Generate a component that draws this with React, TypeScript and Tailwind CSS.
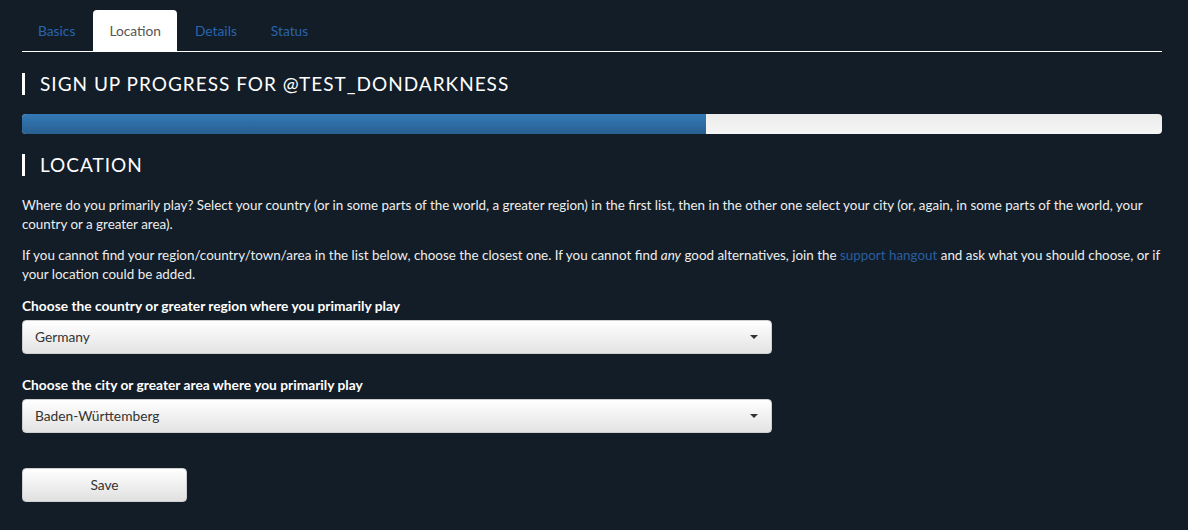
import { useState } from "react";

const tabs = ["Basics", "Location", "Details", "Status"];

const SectionHeading = ({ children }: { children: string }) => (
  <h2 className="border-l-[3px] border-white pl-[15px] text-[19px] leading-[22px] tracking-[1px] uppercase text-white">
    {children}
  </h2>
);

const SelectBox = ({ value }: { value: string }) => (
  <div className="w-[750px] h-[34px] rounded-[4px] bg-gradient-to-b from-white to-[#e3e3e3] border border-[#cfcfcf] flex items-center justify-between pl-[12px] pr-[13px] text-[13.75px] text-[#333]">
    <span>{value}</span>
    <span className="w-0 h-0 border-l-[4px] border-r-[4px] border-t-[4px] border-l-transparent border-r-transparent border-t-[#333]" />
  </div>
);

const App = () => {
  const [active, setActive] = useState("Location");

  return (
    <div
      className="min-h-screen w-full bg-[#121d28] text-[#eeeeee]"
      style={{ fontFamily: "Lato, 'Open Sans', sans-serif" }}
    >
      <div className="ml-[22px] w-[1140px] pt-[10px]">
        {/* Tabs */}
        <div className="flex border-b border-white h-[42px]">
          {tabs.map((tab) => (
            <button
              key={tab}
              onClick={() => setActive(tab)}
              className={
                tab === active
                  ? "h-[42px] -mb-px px-[16px] pt-px mr-[2px] rounded-t-[4px] bg-white text-[13.75px] text-[#555]"
                  : "h-[41px] px-[16px] pt-px mr-[2px] text-[13.75px] text-[#2a64ad]"
              }
            >
              {tab}
            </button>
          ))}
        </div>

        {/* Progress */}
        <div className="mt-[21px]">
          <SectionHeading>Sign up progress for @test_dondarkness</SectionHeading>
        </div>
        <div className="mt-[19px] h-[20px] w-full rounded-[4px] bg-gradient-to-b from-[#ebebeb] to-[#f5f5f5] overflow-hidden">
          <div className="h-full w-[60%] bg-gradient-to-b from-[#337ab7] to-[#286090]" />
        </div>

        {/* Location */}
        <div className="mt-[20px]">
          <SectionHeading>Location</SectionHeading>
        </div>

        <p className="mt-[20px] text-[13.4px] leading-[19px]">
          Where do you primarily play? Select your country (or in some parts of the world, a greater region) in the first list, then in the other one select your city (or, again, in some parts of the world, your country or a greater area).
        </p>
        <p className="mt-[12px] text-[13.4px] leading-[19px]">
          If you cannot find your region/country/town/area in the list below, choose the closest one. If you cannot find <em>any</em> good alternatives, join the{" "}
          <a href="#" className="text-[#2a5d9f]">support hangout</a> and ask what you should choose, or if your location could be added.
        </p>

        <label className="block mt-[12px] text-[13.75px] leading-[19px] font-bold text-white">
          Choose the country or greater region where you primarily play
        </label>
        <div className="mt-[5px]">
          <SelectBox value="Germany" />
        </div>

        <label className="block mt-[21px] text-[13.75px] leading-[19px] font-bold text-white">
          Choose the city or greater area where you primarily play
        </label>
        <div className="mt-[5px]">
          <SelectBox value="Baden-Württemberg" />
        </div>

        <button className="mt-[35px] w-[165px] h-[34px] rounded-[4px] bg-gradient-to-b from-white to-[#e0e0e0] border border-[#cfcfcf] text-[13.75px] text-[#333]">
          Save
        </button>
      </div>
    </div>
  );
};

export default App;
